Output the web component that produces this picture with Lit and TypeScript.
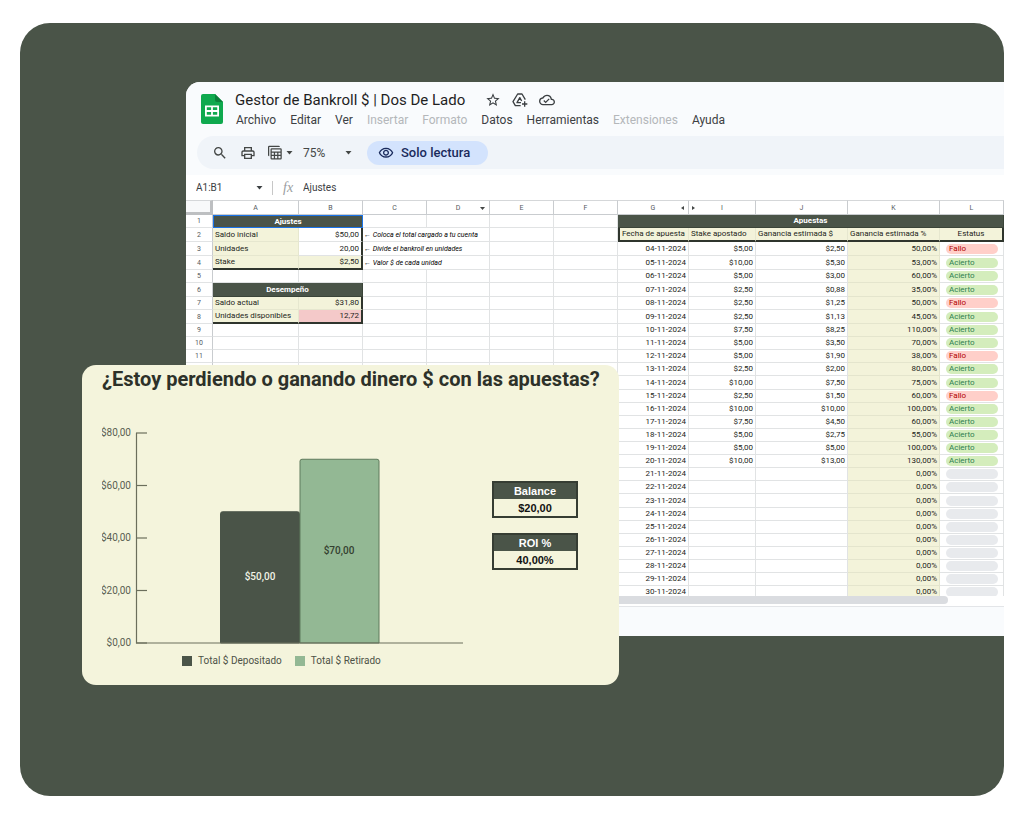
import { LitElement, html, svg, css, nothing } from "lit";
import { customElement, property } from "lit/decorators.js";

const ICONS: Record<string, string> = {
  star: "M22 9.24l-7.19-.62L12 2 9.19 8.63 2 9.24l5.46 4.73L5.82 21 12 17.27 18.18 21l-1.63-7.03L22 9.24zM12 15.4l-3.76 2.27 1-4.28-3.32-2.88 4.38-.38L12 6.1l1.71 4.04 4.38.38-3.32 2.88 1 4.28L12 15.4z",
  cloud:
    "M19.35 10.04A7.49 7.49 0 0 0 12 4C9.11 4 6.6 5.64 5.35 8.04A5.994 5.994 0 0 0 0 14c0 3.31 2.69 6 6 6h13c2.76 0 5-2.24 5-5 0-2.64-2.05-4.78-4.65-4.96zM19 18H6c-2.21 0-4-1.79-4-4 0-2.05 1.53-3.76 3.56-3.97l1.07-.11.5-.95A5.469 5.469 0 0 1 12 6c2.62 0 4.88 1.86 5.39 4.43l.3 1.5 1.53.11A2.98 2.98 0 0 1 22 15c0 1.65-1.35 3-3 3zm-9-3.82l-2.09-2.09L6.5 13.5 10 17l6.01-6.01-1.41-1.41z",
  search:
    "M15.5 14h-.79l-.28-.27A6.471 6.471 0 0 0 16 9.5 6.5 6.5 0 1 0 9.5 16c1.61 0 3.09-.59 4.23-1.57l.27.28v.79l5 4.99L20.49 19l-4.99-5zm-6 0C7.01 14 5 11.99 5 9.5S7.01 5 9.5 5 14 7.01 14 9.5 11.99 14 9.5 14z",
  print:
    "M19 8h-1V3H6v5H5c-1.66 0-3 1.34-3 3v6h4v4h12v-4h4v-6c0-1.66-1.34-3-3-3zM8 5h8v3H8V5zm8 12v2H8v-4h8v2zm2-2v-2H6v2H4v-4c0-.55.45-1 1-1h14c.55 0 1 .45 1 1v4h-2z",
  views:
    "M2 1h15a2 2 0 0 1 2 2H2v15a2 2 0 0 1-2-2V3a2 2 0 0 1 2-2zM6 5h14a2 2 0 0 1 2 2v14a2 2 0 0 1-2 2H6a2 2 0 0 1-2-2V7a2 2 0 0 1 2-2zM6 7v3.500h14V7zM6 12.500v3h3.300v-3zM11.300 12.500v3h3.400v-3zM16.700 12.500v3H20v-3zM6 17.500V21h3.300v-3.500zM11.300 17.500V21h3.400v-3.500zM16.700 17.500V21H20v-3.500z",
  eye: "M12 6c3.79 0 7.17 2.13 8.82 5.5C19.17 14.87 15.79 17 12 17s-7.17-2.13-8.82-5.5C4.83 8.13 8.21 6 12 6m0-2C7 4 2.73 7.11 1 11.5 2.73 15.89 7 19 12 19s9.27-3.11 11-7.5C21.27 7.11 17 4 12 4zm0 5c1.38 0 2.5 1.12 2.5 2.5S13.38 14 12 14s-2.5-1.12-2.5-2.5S10.62 9 12 9m0-2c-2.48 0-4.5 2.02-4.5 4.5S9.52 16 12 16s4.5-2.02 4.5-4.5S14.48 7 12 7z",
  caret: "M4 8l8 9 8-9z",
};

const icon = (name: string, size = 16) => html`<svg
  width=${size}
  height=${size}
  viewBox="0 0 24 24"
  fill="currentColor"
  fill-rule="evenodd"
  aria-hidden="true"
>
  <path d=${ICONS[name]}></path>
</svg>`;

type Bet = [date: string, stake: string, gain: string, pct: string, status: string];

const BETS: Bet[] = [
  ["04-11-2024", "$5,00", "$2,50", "50,00%", "Fallo"],
  ["05-11-2024", "$10,00", "$5,30", "53,00%", "Acierto"],
  ["06-11-2024", "$5,00", "$3,00", "60,00%", "Acierto"],
  ["07-11-2024", "$2,50", "$0,88", "35,00%", "Acierto"],
  ["08-11-2024", "$2,50", "$1,25", "50,00%", "Fallo"],
  ["09-11-2024", "$2,50", "$1,13", "45,00%", "Acierto"],
  ["10-11-2024", "$7,50", "$8,25", "110,00%", "Acierto"],
  ["11-11-2024", "$5,00", "$3,50", "70,00%", "Acierto"],
  ["12-11-2024", "$5,00", "$1,90", "38,00%", "Fallo"],
  ["13-11-2024", "$2,50", "$2,00", "80,00%", "Acierto"],
  ["14-11-2024", "$10,00", "$7,50", "75,00%", "Acierto"],
  ["15-11-2024", "$2,50", "$1,50", "60,00%", "Fallo"],
  ["16-11-2024", "$10,00", "$10,00", "100,00%", "Acierto"],
  ["17-11-2024", "$7,50", "$4,50", "60,00%", "Acierto"],
  ["18-11-2024", "$5,00", "$2,75", "55,00%", "Acierto"],
  ["19-11-2024", "$5,00", "$5,00", "100,00%", "Acierto"],
  ["20-11-2024", "$10,00", "$13,00", "130,00%", "Acierto"],
  ...Array.from({ length: 10 }, (_, i): Bet => [`${21 + i}-11-2024`, "", "", "0,00%", ""]),
];

const TALL_ROWS = new Set([2, 3, 6, 13, 22]);
const NUMBERED_ROWS = 11;

@customElement("sheet-header")
class SheetHeader extends LitElement {
  static styles = css`
    :host {
      display: block;
      font-family: Roboto, sans-serif;
      color: #3c4043;
      background: #f9fbfd;
      padding-top: 9px;
    }
    svg {
      display: block;
      flex: none;
    }
    button {
      font: inherit;
      color: inherit;
      background: none;
      border: 0;
      padding: 0;
      white-space: nowrap;
    }
    .brand {
      display: flex;
      gap: 12px;
      padding-left: 15px;
      height: 45px;
    }
    .logo {
      padding-top: 3px;
    }
    .title-row {
      display: flex;
      align-items: center;
      gap: 11px;
      height: 18px;
    }
    h1 {
      margin: 0 9px 0 0;
      font: 400 15px/18px Roboto, sans-serif;
      color: #1f1f1f;
      white-space: nowrap;
    }
    .menu {
      display: flex;
      gap: 14px;
      font-size: 12px;
      line-height: 22px;
      color: #3c4043;
      padding-left: 1px;
    }
    .menu button:disabled {
      color: #b4b7ba;
    }
    .toolbar {
      display: flex;
      align-items: center;
      height: 33px;
      margin-left: 11px;
      padding-left: 15px;
      border-radius: 17px 0 0 17px;
      background: #f0f4f9;
      color: #444746;
    }
    .tools {
      display: flex;
      align-items: center;
      gap: 12px;
    }
    .split {
      display: flex;
      align-items: center;
      gap: 2px;
    }
    .zoom {
      display: flex;
      align-items: center;
      margin: 0 14px 0 9px;
    }
    select {
      appearance: none;
      border: 0;
      padding: 0;
      margin: 0;
      width: 41px;
      background: none;
      color: inherit;
      font: 400 12px/16px Roboto, sans-serif;
    }
    .mode {
      display: flex;
      align-items: center;
      gap: 7px;
      height: 24px;
      padding: 0 18px 0 11px;
      border-radius: 12px;
      background: #d3e3fd;
      color: #1a2b5c;
      font-weight: 500;
      font-size: 13px;
    }
    .formula {
      display: flex;
      align-items: center;
      height: 25px;
      margin-top: 6px;
      padding-left: 10px;
      background: #fff;
    }
    input {
      border: 0;
      padding: 0;
      background: none;
      color: #3c4043;
      font: 400 10px/14px Roboto, sans-serif;
      outline: none;
    }
    .name-box {
      width: 59px;
    }
    .rule {
      width: 1px;
      height: 14px;
      background: #c7c7c7;
      margin: 0 10px 0 8px;
    }
    .fx {
      width: 20px;
      font: italic 400 14px/14px "Liberation Serif", serif;
      color: #9a9da1;
    }
    .expression {
      flex: 1;
      min-width: 0;
    }
  `;

  render() {
    const menu: [string, boolean][] = [
      ["Archivo", true],
      ["Editar", true],
      ["Ver", true],
      ["Insertar", false],
      ["Formato", false],
      ["Datos", true],
      ["Herramientas", true],
      ["Extensiones", false],
      ["Ayuda", true],
    ];
    return html`
      <header class="brand">
        <svg class="logo" width="22" height="30" viewBox="0 0 22 30" aria-hidden="true">
          <path d="M2 0h12l8 8v20a2 2 0 0 1-2 2H2a2 2 0 0 1-2-2V2a2 2 0 0 1 2-2z" fill="#0fa94e"></path>
          <path d="M14 0l8 8h-6a2 2 0 0 1-2-2z" fill="#0b7f3a"></path>
          <path
            d="M4 11.5h14v11H4zM5.8 13.3v2.8h4.3v-2.8zM11.9 13.3v2.8h4.3v-2.8zM5.8 17.9v2.8h4.3v-2.8zM11.9 17.9v2.8h4.3v-2.8z"
            fill="#fff"
            fill-rule="evenodd"
          ></path>
        </svg>
        <div>
          <div class="title-row">
            <h1>Gestor de Bankroll $ | Dos De Lado</h1>
            <button aria-label="Destacar">${icon("star")}</button>
            <button aria-label="Añadir a Drive">
              <svg width="16" height="16" viewBox="0 0 24 24" fill="none" stroke="currentColor" stroke-width="2" stroke-linejoin="round" aria-hidden="true">
                <path d="M13 20.500H5L1.500 14.500 8.500 3h6.500l5 8.500"></path>
                <path d="M13.500 16H7.500l4.200-7.500 2.800 5M19 14v8M15 18h8"></path>
              </svg>
            </button>
            <button aria-label="Estado del documento">${icon("cloud")}</button>
          </div>
          <nav class="menu">
            ${menu.map(([label, on]) => html`<button ?disabled=${!on}>${label}</button>`)}
          </nav>
        </div>
      </header>
      <div class="toolbar">
        <div class="tools">
          <button aria-label="Buscar">${icon("search")}</button>
          <button aria-label="Imprimir">${icon("print")}</button>
          <button class="split" aria-label="Vistas de filtro">${icon("views", 15)}${icon("caret", 9)}</button>
        </div>
        <div class="zoom">
          <select aria-label="Zoom">
            <option>75%</option>
          </select>
          ${icon("caret", 9)}
        </div>
        <button class="mode">${icon("eye")}Solo lectura</button>
      </div>
      <div class="formula">
        <input class="name-box" aria-label="Cuadro de nombres" value="A1:B1" readonly />
        ${icon("caret", 9)}
        <span class="rule"></span>
        <span class="fx">fx</span>
        <input class="expression" aria-label="Barra de fórmulas" value="Ajustes" readonly />
      </div>
    `;
  }
}

@customElement("sheet-grid")
class SheetGrid extends LitElement {
  static styles = css`
    :host {
      display: block;
      overflow: hidden;
      max-height: 396px;
      background: #fff;
      font-family: Roboto, sans-serif;
      color: #1c1e20;
    }
    table {
      width: 100%;
      table-layout: fixed;
      border-collapse: separate;
      border-spacing: 0;
      font-size: 8px;
      line-height: 12px;
    }
    .w-head { width: 27px; }
    .w-a { width: 86px; }
    .w-64 { width: 64px; }
    .w-d { width: 63px; }
    .w-g { width: 71px; }
    .w-i { width: 67px; }
    .w-j { width: 92px; }
    th,
    td {
      box-sizing: border-box;
      height: 13px;
      padding: 0 2px;
      border-right: 1px solid #e1e3e4;
      border-bottom: 1px solid #e1e3e4;
      white-space: nowrap;
      font-weight: 400;
      text-align: left;
    }
    .tall > * {
      height: 14px;
    }
    thead th {
      height: 15px;
      padding: 0 6px;
      border-top: 1px solid #d5d7d9;
      border-right-color: #c9cccf;
      border-bottom-color: #c9cccf;
      text-align: center;
      font-size: 7px;
      color: #55595d;
    }
    thead .corner {
      background: #f8f9fa;
      border-right: 3px solid #bdbfc1;
      border-bottom: 3px solid #bdbfc1;
    }
    .tag {
      display: flex;
      align-items: center;
    }
    .tag span {
      flex: 1;
    }
    .tag svg {
      margin: 0 -3px;
    }
    .num {
      text-align: center;
      font-size: 7px;
      color: #55595d;
      border-right-color: #c9cccf;
    }
    .right {
      text-align: right;
    }
    .center {
      text-align: center;
    }
    .cream {
      background: #f3f3da;
      border-color: #e6e7cf;
    }
    .pink {
      background: #f4c9c9;
    }
    .band {
      background: #4a5448;
      border-color: #3a4438;
      color: #fff;
      font-weight: 700;
      text-align: center;
    }
    .selected {
      border: 1px solid #1a73e8;
      line-height: 11px;
    }
    .edge-r {
      border-right: 2px solid #2f352d;
    }
    .edge-b {
      border-bottom: 2px solid #2f352d;
    }
    .edge-l {
      border-left: 2px solid #2f352d;
    }
    .note {
      padding-left: 1px;
      font-size: 7px;
      font-style: italic;
      color: #000;
    }
    .k {
      background: #f3f3da;
      border-color: #e4e5cd;
    }
    .state {
      padding: 0 5px 0 6px;
    }
    .chip {
      display: block;
      height: 10px;
      line-height: 10px;
      padding-left: 3px;
      border-radius: 5px;
      background: #e8eaed;
    }
    .Fallo {
      background: #ffcfc9;
      color: #b10202;
    }
    .Acierto {
      background: #d4edbc;
      color: #2e8050;
    }
  `;

  private arrow(d: string) {
    return html`<svg width="6" height="6" viewBox="0 0 6 6" aria-hidden="true"><path d=${d} fill="#444746"></path></svg>`;
  }

  private left(n: number) {
    const label = (text: string, extra = "") => html`<td class="cream ${extra}">${text}</td>`;
    const value = (text: string, extra = "") => html`<td class="right ${extra} edge-r">${text}</td>`;
    const note = (text: string) => html`<td class="note" colspan="2">${text}</td>`;
    const blank = html`<td></td><td></td>`;
    switch (n) {
      case 1:
        return html`<td class="band selected" colspan="2">Ajustes</td>${blank}`;
      case 2:
        return html`${label("Saldo inicial")}${value("$50,00")}${note("← Coloca el total cargado a tu cuenta")}`;
      case 3:
        return html`${label("Unidades")}${value("20,00")}${note("← Divide el bankroll en unidades")}`;
      case 4:
        return html`${label("Stake", "edge-b")}${value("$2,50", "cream edge-b")}${note("← Valor $ de cada unidad")}`;
      case 6:
        return html`<td class="band" colspan="2">Desempeño</td>${blank}`;
      case 7:
        return html`${label("Saldo actual")}${value("$31,80", "cream")}${blank}`;
      case 8:
        return html`${label("Unidades disponibles", "edge-b")}${value("12,72", "pink edge-b")}${blank}`;
      default:
        return html`${blank}${blank}`;
    }
  }

  private rightSide(n: number) {
    if (n === 1) return html`<td class="band" colspan="5">Apuestas</td>`;
    if (n === 2)
      return html`<td class="cream edge-b edge-l">Fecha de apuesta</td>
        <td class="cream edge-b">Stake apostado</td>
        <td class="cream edge-b">Ganancia estimada $</td>
        <td class="cream edge-b">Ganancia estimada %</td>
        <td class="cream edge-b edge-r center">Estatus</td>`;
    const [date, stake, gain, pct, status] = BETS[n - 3];
    return html`<td class="right">${date}</td>
      <td class="right">${stake}</td>
      <td class="right">${gain}</td>
      <td class="right k">${pct}</td>
      <td class="state"><span class="chip ${status}">${status || nothing}</span></td>`;
  }

  render() {
    const rows = Array.from({ length: 29 }, (_, i) => i + 1);
    return html`
      <table>
        <colgroup>
          <col class="w-head" /><col class="w-a" /><col class="w-64" /><col class="w-64" /><col class="w-d" />
          <col class="w-64" /><col class="w-64" /><col class="w-g" /><col class="w-i" /><col class="w-j" />
          <col class="w-j" /><col />
        </colgroup>
        <thead>
          <tr>
            <th class="corner"></th>
            <th>A</th>
            <th>B</th>
            <th>C</th>
            <th><div class="tag"><span>D</span>${this.arrow("M0 2h5L2.500 5z")}</div></th>
            <th>E</th>
            <th>F</th>
            <th><div class="tag"><span>G</span>${this.arrow("M5 1v4L2 3z")}</div></th>
            <th><div class="tag">${this.arrow("M0 1v4l3-2z")}<span>I</span></div></th>
            <th>J</th>
            <th>K</th>
            <th>L</th>
          </tr>
        </thead>
        <tbody>
          ${rows.map(
            (n) => html`<tr class=${TALL_ROWS.has(n) ? "tall" : ""}>
              <th class="num" scope="row">${n <= NUMBERED_ROWS ? n : nothing}</th>
              ${this.left(n)}
              <td></td>
              <td></td>
              ${this.rightSide(n)}
            </tr>`
          )}
        </tbody>
      </table>
    `;
  }
}

@customElement("result-card")
class ResultCard extends LitElement {
  @property({ type: Number }) deposited = 50;
  @property({ type: Number }) withdrawn = 70;

  static styles = css`
    :host {
      display: block;
      box-sizing: border-box;
      padding: 0 20px 16px;
      border-radius: 14px;
      background: #f4f4dc;
      font-family: Roboto, sans-serif;
      color: #2d3129;
    }
    h2 {
      margin: 0;
      font-size: 20px;
      line-height: 28px;
      font-weight: 700;
      white-space: nowrap;
      text-align: center;
    }
    .body {
      display: flex;
      align-items: flex-start;
      gap: 27px;
    }
    .plot {
      display: block;
    }
    .plot text {
      font: 400 10px Roboto, sans-serif;
      fill: #5a5f52;
    }
    .plot .on-dark {
      fill: #f1f3e6;
      font-weight: 500;
    }
    .plot .on-light {
      fill: #33402f;
      font-weight: 500;
    }
    .legend {
      display: flex;
      gap: 13px;
      padding-left: 80px;
      font-size: 10px;
      line-height: 16px;
      color: #4d5247;
    }
    .legend span {
      display: flex;
      align-items: center;
      gap: 6px;
    }
    .legend i {
      width: 10px;
      height: 10px;
      background: #4a5448;
    }
    .legend .green {
      background: #93b894;
    }
    .stats {
      display: grid;
      gap: 15px;
      padding-top: 88px;
    }
    .stat {
      width: 86px;
      border: 2px solid #363d33;
      border-spacing: 0;
      font: 700 11px/16px "Liberation Sans", sans-serif;
      text-align: center;
      color: #111;
    }
    .stat th,
    .stat td {
      padding: 0;
    }
    .stat th {
      background: #4a5448;
      color: #fff;
    }
    .stat td {
      height: 17px;
    }
  `;

  private money(n: number) {
    return `$${n},00`;
  }

  private stat(label: string, value: string) {
    return html`<table class="stat">
      <tr><th scope="col">${label}</th></tr>
      <tr><td>${value}</td></tr>
    </table>`;
  }

  render() {
    const base = 250;
    const y = (v: number) => base - (v * 210) / 80;
    const bar = (x: number, v: number, fill: string, edge: string) => svg`<path
      d="M${x} ${base}V${y(v) + 2}q0-2 2-2h75q2 0 2 2V${base}z" fill=${fill} stroke=${edge} />`;
    return html`
      <h2>¿Estoy perdiendo o ganando dinero $ con las apuestas?</h2>
      <div class="body">
        <div>
          <svg class="plot" width="363" height="260" viewBox="0 0 363 260" role="img" aria-label="Total depositado y total retirado">
            ${[0, 20, 40, 60, 80].map(
              (v) => svg`<text x="29" y=${y(v) + 3} text-anchor="end">${this.money(v)}</text>
                <path d="M34 ${y(v)}h11" stroke="#6b6e5c" stroke-width="1.200" />`
            )}
            ${bar(118.5, this.deposited, "#4a5448", "#4a5448")}
            ${bar(198, this.withdrawn, "#93b894", "#5f7a5c")}
            <path d="M34.500 40V250H361" fill="none" stroke="#6b6e5c" stroke-width="1.200"></path>
            <text class="on-dark" x="158" y="187" text-anchor="middle">${this.money(this.deposited)}</text>
            <text class="on-light" x="237" y="161" text-anchor="middle">${this.money(this.withdrawn)}</text>
          </svg>
          <div class="legend">
            <span><i></i>Total $ Depositado</span>
            <span><i class="green"></i>Total $ Retirado</span>
          </div>
        </div>
        <div class="stats">${this.stat("Balance", "$20,00")} ${this.stat("ROI %", "40,00%")}</div>
      </div>
    `;
  }
}

@customElement("app-root")
class AppRoot extends LitElement {
  static styles = css`
    :host {
      display: block;
      padding: 23px 20px;
      background: #fff;
    }
    .stage {
      position: relative;
      padding: 59px 0 160px 166px;
      border-radius: 30px;
      background: #4a5448;
    }
    .sheet {
      overflow: hidden;
      border-radius: 14px 0 0 0;
      background: #f9fbfd;
    }
    .scroll {
      height: 10px;
      background: #fff;
      border-bottom: 1px solid #e3e5e8;
    }
    .thumb {
      width: 762px;
      height: 8px;
      border-radius: 4px;
      background: #dadce0;
    }
    .tabs {
      height: 29px;
    }
    .card {
      position: absolute;
      left: 62px;
      bottom: 111px;
      width: 537px;
    }
  `;

  render() {
    return html`
      <main class="stage">
        <section class="sheet">
          <sheet-header></sheet-header>
          <sheet-grid></sheet-grid>
          <div class="scroll"><div class="thumb"></div></div>
          <div class="tabs"></div>
        </section>
        <result-card class="card"></result-card>
      </main>
    `;
  }
}
